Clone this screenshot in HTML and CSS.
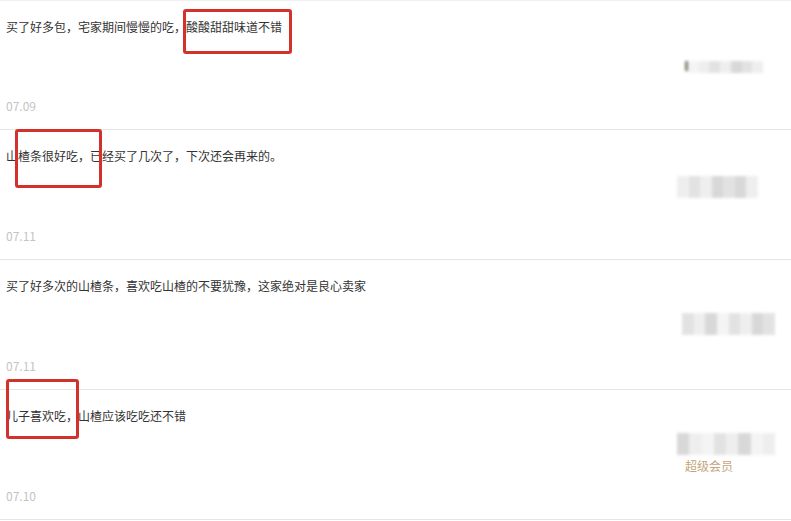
FILE: index.html
```html
<!DOCTYPE html>
<html lang="zh-CN">
<head>
    <meta charset="UTF-8">
    <meta name="viewport" content="width=device-width, initial-scale=1.0">
    <title>评价</title>
    <link rel="stylesheet" href="styles.css">
</head>
<body>
    <div class="review-list">
        <div class="review">
            <p class="review-text">买了好多包，宅家期间慢慢的吃，酸酸甜甜味道不错</p>
            <div class="review-user user-a">
                <span class="mosaic">
                    <i class="tick"></i><i class="c4"></i><i class="c1"></i><i class="c2"></i><i class="c1"></i><i class="c3"></i><i class="c2"></i><i class="c1"></i>
                </span>
            </div>
            <div class="review-date">07.09</div>
            <div class="mark mark-a"></div>
        </div>

        <div class="review">
            <p class="review-text">山楂条很好吃，已经买了几次了，下次还会再来的。</p>
            <div class="review-user user-b">
                <span class="mosaic tall">
                    <i class="c1"></i><i class="c2"></i><i class="c1"></i><i class="c3"></i><i class="c2"></i><i class="c3"></i><i class="c1"></i>
                </span>
            </div>
            <div class="review-date">07.11</div>
            <div class="mark mark-b"></div>
        </div>

        <div class="review">
            <p class="review-text">买了好多次的山楂条，喜欢吃山楂的不要犹豫，这家绝对是良心卖家</p>
            <div class="review-user user-c">
                <span class="mosaic tall">
                    <i class="c2"></i><i class="c1"></i><i class="c3"></i><i class="c4"></i><i class="c2"></i><i class="c1"></i><i class="c3"></i><i class="c2"></i>
                </span>
            </div>
            <div class="review-date">07.11</div>
        </div>

        <div class="review">
            <p class="review-text">儿子喜欢吃，山楂应该吃吃还不错</p>
            <div class="review-user user-d">
                <span class="mosaic tall">
                    <i class="c3"></i><i class="c1"></i><i class="c4"></i><i class="c2"></i><i class="c1"></i><i class="c3"></i><i class="c4"></i><i class="c1"></i>
                </span>
                <span class="vip">超级会员</span>
            </div>
            <div class="review-date">07.10</div>
            <div class="mark mark-d"></div>
        </div>
    </div>
</body>
</html>
```

FILE: styles.css
```css
:root {
    --text: #333333;
    --muted: #c4c4c4;
    --line: #e6e6e6;
    --mark: #d3312b;
    --gold: #c4a57a;
}

* {
    margin: 0;
    padding: 0;
    box-sizing: border-box;
}

body {
    font-family: "Noto Sans CJK SC", "Noto Sans", sans-serif;
    font-size: 12px;
    color: var(--text);
    background: #ffffff;
    width: 791px;
    height: 521px;
    overflow: hidden;
}

.review-list {
    border-top: 1px solid #efefef;
}

.review {
    position: relative;
    height: 130px;
    border-bottom: 1px solid var(--line);
    display: flex;
    flex-direction: column;
    padding: 17px 0 14px 6px;
}

.review:first-child {
    height: 129px;
}

.review-text {
    line-height: 18px;
}

.review-user {
    display: flex;
    flex-direction: column;
    align-items: flex-start;
    align-self: flex-end;
}

.user-a { margin: 25px 28px 0 0; }
.user-b { margin: 11px 33px 0 0; }
.user-c { margin: 18px 16px 0 0; }
.user-d { margin: 8px 16px 0 0; }

.mosaic {
    display: flex;
    height: 12px;
    filter: blur(1.5px);
    opacity: 0.85;
}

.mosaic.tall {
    height: 22px;
}

.mosaic i {
    display: block;
    flex: 1;
    height: 100%;
}

.user-a .mosaic { width: 78px; }
.user-b .mosaic { width: 81px; }
.user-c .mosaic { width: 93px; }
.user-d .mosaic { width: 98px; }

.mosaic .tick {
    flex: 0 0 3px;
    background: #6a6a5a;
    height: 10px;
}

.mosaic .c1 { background: #ececec; }
.mosaic .c2 { background: #dedede; }
.mosaic .c3 { background: #d2d2d2; }
.mosaic .c4 { background: #f3f3f3; }

.vip {
    margin: 4px 0 0 8px;
    color: var(--gold);
    line-height: 14px;
}

.review-date {
    margin-top: auto;
    color: var(--muted);
    line-height: 18px;
}

/* 红框标注 */
.mark {
    position: absolute;
    border: 3px solid var(--mark);
    border-radius: 3px;
    z-index: 2;
}

.mark-a { left: 183px; top: 8px; width: 109px; height: 45px; }
.mark-b { left: 15px; top: -1px; width: 87px; height: 59px; }
.mark-d { left: 6px; top: -11px; width: 73px; height: 60px; }
```
